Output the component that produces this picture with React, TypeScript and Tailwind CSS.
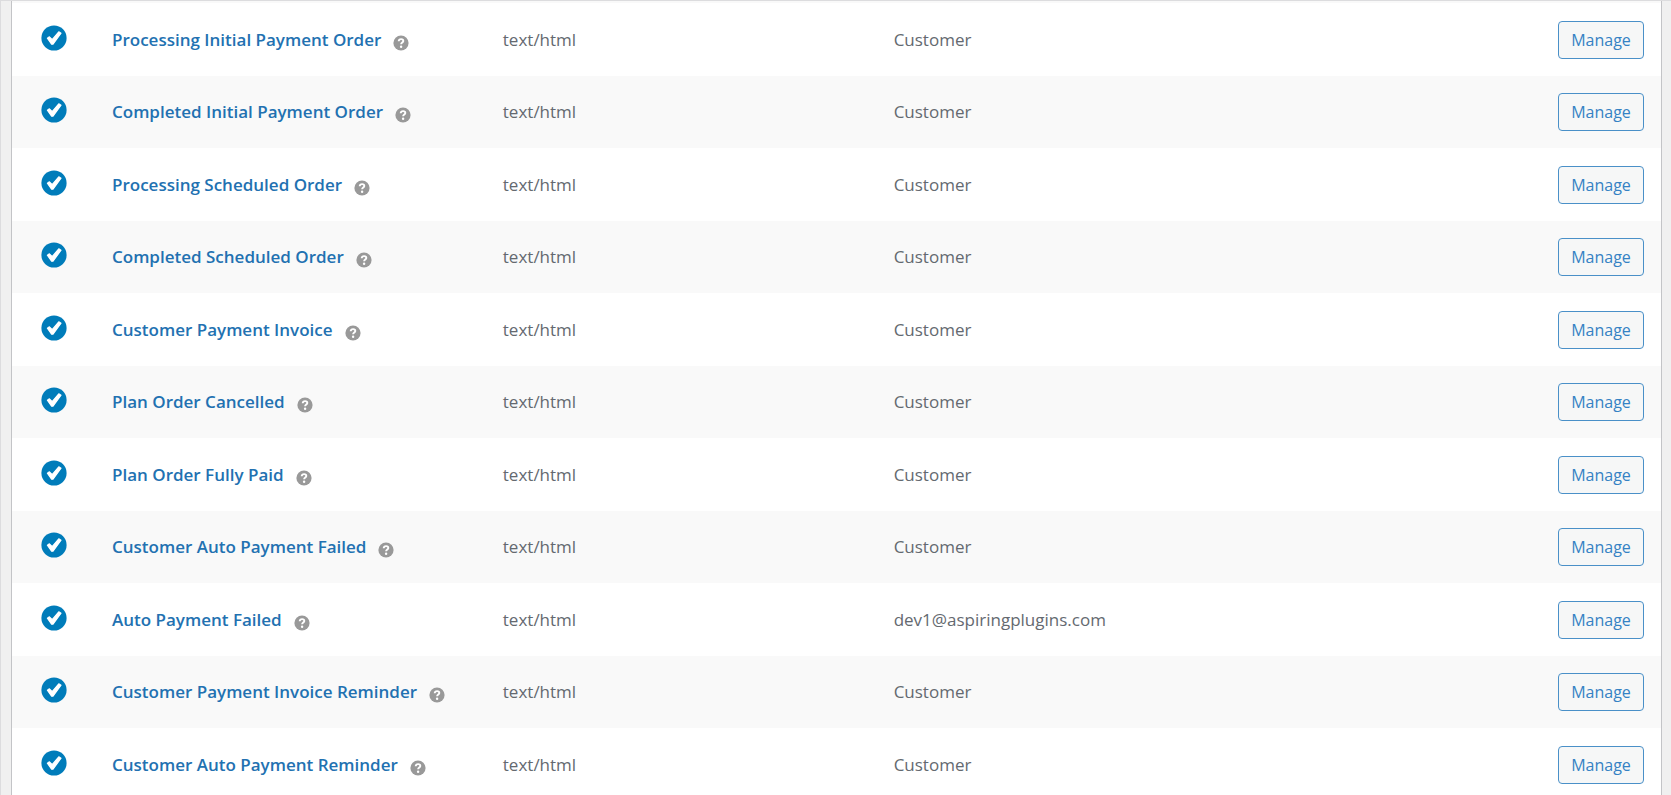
const emails = [
  { id: 'processing-initial', name: 'Processing Initial Payment Order', recipient: 'Customer' },
  { id: 'completed-initial', name: 'Completed Initial Payment Order', recipient: 'Customer' },
  { id: 'processing-scheduled', name: 'Processing Scheduled Order', recipient: 'Customer' },
  { id: 'completed-scheduled', name: 'Completed Scheduled Order', recipient: 'Customer' },
  { id: 'payment-invoice', name: 'Customer Payment Invoice', recipient: 'Customer' },
  { id: 'plan-cancelled', name: 'Plan Order Cancelled', recipient: 'Customer' },
  { id: 'plan-paid', name: 'Plan Order Fully Paid', recipient: 'Customer' },
  { id: 'customer-auto-failed', name: 'Customer Auto Payment Failed', recipient: 'Customer' },
  { id: 'auto-failed', name: 'Auto Payment Failed', recipient: 'dev1@aspiringplugins.com' },
  { id: 'invoice-reminder', name: 'Customer Payment Invoice Reminder', recipient: 'Customer' },
  { id: 'auto-reminder', name: 'Customer Auto Payment Reminder', recipient: 'Customer' },
];

function StatusEnabled() {
  return (
    <svg viewBox="0 0 26 26" className="w-[26px] h-[26px] mb-1" aria-hidden="true">
      <circle cx="13" cy="13" r="12.6" fill="#007cba" />
      <path d="M6.4 13.2L8.4 11.8L11.2 14.6L17.8 6.8L20 8.2L12 19.2H10.6Z" fill="#fff" stroke="#fff" strokeWidth="1.2" strokeLinejoin="round" />
    </svg>
  );
}

function HelpTip() {
  return (
    <svg viewBox="0 0 16 16" className="w-4 h-4 mt-1.5 shrink-0" aria-hidden="true">
      <circle cx="8" cy="8" r="7.6" fill="#999" />
      <path d="M5.7 6.2C5.8 4.6 6.9 4.1 8.1 4.1C9.4 4.1 10.3 4.8 10.3 5.9C10.3 7.5 8.1 7.5 8.1 9.3" fill="none" stroke="#fff" strokeWidth="1.9" />
      <circle cx="8.1" cy="11.7" r="1.2" fill="#fff" />
    </svg>
  );
}

export default function App() {
  return (
    <div className="min-h-screen bg-[#f0f0f0] border-t border-l border-[#dcdcde] pl-[10px] pr-[9px] overflow-hidden font-['Open_Sans',sans-serif] text-[17px] leading-6">
      <div className="bg-white border-x border-[#c3c4c7]">
        {/* bottom edge of the striped row above */}
        <div className="h-[2px] bg-[#f9f9f9]" />
        <table className="w-full table-fixed border-collapse">
          <colgroup>
            <col className="w-[80px]" />
            <col className="w-[23.7%]" />
            <col className="w-[23.7%]" />
            <col />
            <col />
          </colgroup>
          <tbody>
            {emails.map((email) => (
              <tr key={email.id} className="h-[73px] even:h-[72px] even:bg-[#f9f9f9]">
                <td className="pl-[29px]">
                  <StatusEnabled />
                </td>
                <td className="pl-5">
                  <div className="flex items-center gap-3">
                    <a href={`#${email.id}`} className="font-semibold text-[#2271b1] whitespace-nowrap">
                      {email.name}
                    </a>
                    <HelpTip />
                  </div>
                </td>
                <td className="pl-5 text-[#646970]">text/html</td>
                <td className="pl-5 text-[#646970]">{email.recipient}</td>
                <td className="pr-[17px] text-right">
                  <button
                    type="button"
                    className="w-[86px] h-[38px] rounded-[4px] border border-[#4a90c8] bg-[#f6f7f7] text-[16px] text-[#3582c4] hover:bg-[#f0f0f1]"
                  >
                    Manage
                  </button>
                </td>
              </tr>
            ))}
          </tbody>
        </table>
      </div>
    </div>
  );
}
